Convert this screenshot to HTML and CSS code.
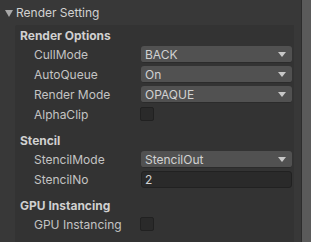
FILE: index.html
```html
<!DOCTYPE html>
<html lang="en">
<head>
  <meta charset="UTF-8">
  <meta name="viewport" content="width=device-width, initial-scale=1.0">
  <title>Render Setting</title>
  <link rel="stylesheet" href="styles.css">
</head>
<body>
  <div class="inspector">
    <div class="panel">
      <div class="foldout">
        <svg class="fold-arrow" width="8" height="7" viewBox="0 0 8 7"><polygon points="0,0 8,0 4,7" fill="#a8a8a8"/></svg>
        <span>Render Setting</span>
      </div>
      <div class="box">
        <div class="group">
          <div class="group-title">Render Options</div>
          <div class="row">
            <div class="label">CullMode</div>
            <div class="popup"><span>BACK</span><i class="caret"></i></div>
          </div>
          <div class="row">
            <div class="label">AutoQueue</div>
            <div class="popup"><span>On</span><i class="caret"></i></div>
          </div>
          <div class="row">
            <div class="label">Render Mode</div>
            <div class="popup"><span>OPAQUE</span><i class="caret"></i></div>
          </div>
          <div class="row">
            <div class="label">AlphaClip</div>
            <div class="toggle"></div>
          </div>
        </div>
        <div class="group">
          <div class="group-title">Stencil</div>
          <div class="row">
            <div class="label">StencilMode</div>
            <div class="popup"><span>StencilOut</span><i class="caret"></i></div>
          </div>
          <div class="row">
            <div class="label">StencilNo</div>
            <div class="field">2</div>
          </div>
        </div>
        <div class="group">
          <div class="group-title">GPU Instancing</div>
          <div class="row">
            <div class="label">GPU Instancing</div>
            <div class="toggle"></div>
          </div>
        </div>
      </div>
    </div>
    <div class="scrollbar"></div>
  </div>
</body>
</html>
```

FILE: styles.css
```css
html, body {
  margin: 0;
  padding: 0;
  background: #383838;
}
body {
  width: 311px;
  height: 242px;
  overflow: hidden;
  font-family: Inter, "Noto Sans", sans-serif;
  font-size: 12px;
  color: #c4c4c4;
}
.inspector {
  display: flex;
  height: 242px;
}
.panel {
  flex: 1;
  padding-right: 7px;
}
.scrollbar {
  width: 9px;
  background: #5a5a5a;
  border-left: 1px solid #2c2c2c;
}
.foldout {
  height: 25px;
  display: flex;
  align-items: center;
  gap: 3px;
  padding-left: 5px;
  color: #d2d2d2;
}
.fold-arrow {
  margin-top: 1px;
}
.box {
  margin-left: 15px;
  height: 217px;
  background: #333333;
  border-top-left-radius: 2px;
  padding: 2px 2px 0 5px;
  box-sizing: border-box;
}
.group {
  margin-bottom: 8px;
}
.group-title {
  height: 17px;
  line-height: 17px;
  font-weight: 700;
  color: #d0d0d0;
}
.row {
  height: 20px;
  display: flex;
  align-items: center;
}
.label {
  width: 107px;
  padding-left: 14px;
  flex-shrink: 0;
}
.popup {
  flex: 1;
  height: 16px;
  background: #515151;
  border-bottom: 1px solid #2b2b2b;
  border-radius: 3px;
  display: flex;
  align-items: center;
  justify-content: space-between;
  padding: 0 6px 0 4px;
  color: #d2d2d2;
  margin-top: 1px;
}
.caret {
  width: 0;
  height: 0;
  border-left: 4px solid transparent;
  border-right: 4px solid transparent;
  border-top: 5px solid #c8c8c8;
}
.toggle {
  width: 12px;
  height: 12px;
  background: #2a2a2a;
  border: 1px solid #212121;
  border-radius: 2px;
  margin-left: -1px;
}
.field {
  flex: 1;
  height: 15px;
  line-height: 15px;
  background: #2a2a2a;
  border: 1px solid #212121;
  border-radius: 3px;
  padding-left: 3px;
  color: #d2d2d2;
}
```
